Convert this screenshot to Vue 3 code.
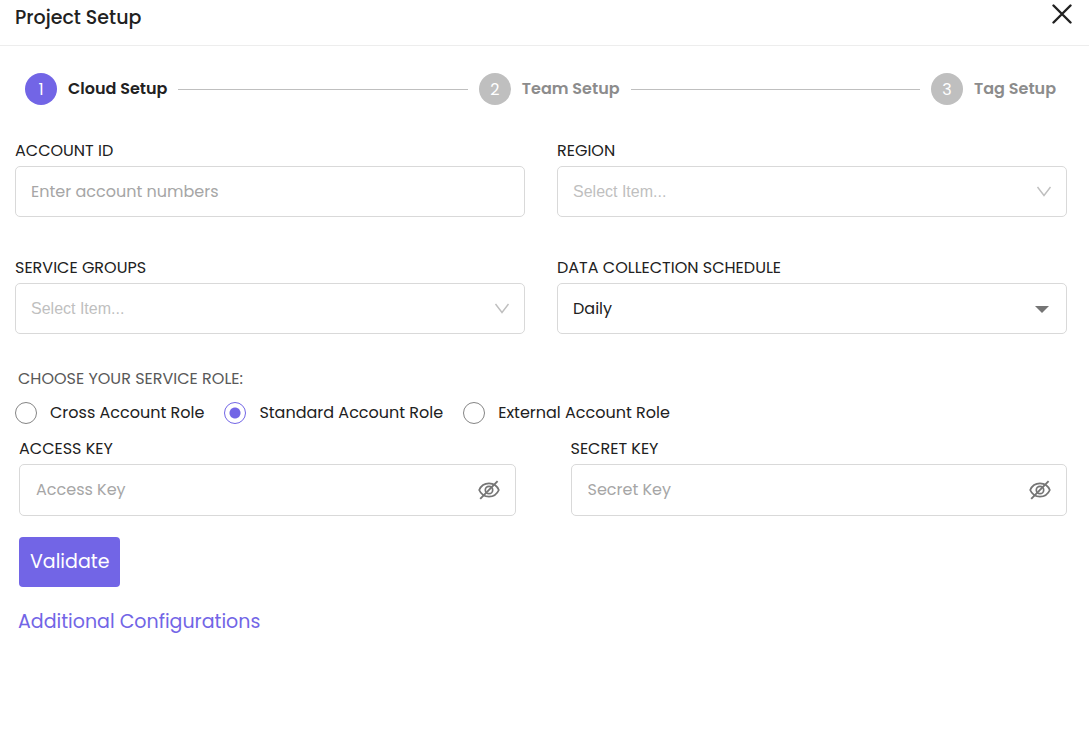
<script setup>
import { ref } from 'vue'

const steps = ['Cloud Setup', 'Team Setup', 'Tag Setup']
const roles = ['Cross Account Role', 'Standard Account Role', 'External Account Role']

const current = ref(0)
const role = ref('Standard Account Role')
const accountId = ref('')
const region = ref('')
const group = ref('')
const schedule = ref('Daily')
const keys = ref([
  { id: 'access', label: 'Access Key', value: '', shown: false },
  { id: 'secret', label: 'Secret Key', value: '', shown: false },
])
</script>

<template>
  <main class="page">
    <header class="head">
      <h1>Project Setup</h1>
      <button type="button" class="close" aria-label="Close">
        <svg width="20" height="20" viewBox="0 0 20 20">
          <path d="M1.5 1.5 L18.5 18.5 M18.5 1.5 L1.5 18.5" stroke="#212121" stroke-width="2.4" stroke-linecap="round" />
        </svg>
      </button>
    </header>

    <ol class="steps">
      <li v-for="(s, i) in steps" :key="s" class="step" :class="{ active: i === current }">
        <span class="num">{{ i + 1 }}</span>
        <span class="name">{{ s }}</span>
      </li>
    </ol>

    <form class="form" @submit.prevent>
      <div class="grid">
        <div class="field">
          <label for="account">ACCOUNT ID</label>
          <div class="box">
            <input id="account" v-model="accountId" type="text" placeholder="Enter account numbers" />
          </div>
        </div>
        <div class="field">
          <label for="region">REGION</label>
          <div class="box">
            <select id="region" v-model="region" class="empty">
              <option value="">Select Item...</option>
            </select>
            <svg class="chevron" width="16" height="12" viewBox="0 0 16 12">
              <path d="M1.5 1 L8 9.5 L14.5 1" fill="none" stroke="#bfbfbf" stroke-width="1.4" />
            </svg>
          </div>
        </div>
        <div class="field">
          <label for="group">SERVICE GROUPS</label>
          <div class="box">
            <select id="group" v-model="group" class="empty">
              <option value="">Select Item...</option>
            </select>
            <svg class="chevron" width="16" height="12" viewBox="0 0 16 12">
              <path d="M1.5 1 L8 9.5 L14.5 1" fill="none" stroke="#bfbfbf" stroke-width="1.4" />
            </svg>
          </div>
        </div>
        <div class="field">
          <label for="schedule">DATA COLLECTION SCHEDULE</label>
          <div class="box">
            <select id="schedule" v-model="schedule">
              <option>Daily</option>
            </select>
            <svg class="caret" width="14" height="9" viewBox="0 0 14 9">
              <path d="M0 2 H14 L7 9 Z" fill="#757575" />
            </svg>
          </div>
        </div>
      </div>

      <fieldset class="roles">
        <legend>CHOOSE YOUR SERVICE ROLE:</legend>
        <div class="options">
          <label v-for="r in roles" :key="r" class="option">
            <input v-model="role" type="radio" name="role" :value="r" />
            <span>{{ r }}</span>
          </label>
        </div>
      </fieldset>

      <div class="keys">
        <div v-for="k in keys" :key="k.id" class="field">
          <label :for="k.id">{{ k.label.toUpperCase() }}</label>
          <div class="box tall">
            <input :id="k.id" v-model="k.value" :type="k.shown ? 'text' : 'password'" :placeholder="k.label" />
            <button type="button" class="eye" :aria-label="'Show ' + k.label" @click="k.shown = !k.shown">
              <svg width="22" height="20" viewBox="0 0 22 20" fill="none" stroke="#757575">
                <path d="M1.2 10 C3 5.8 6.6 3.4 11 3.4 S19 5.8 20.8 10 C19 14.2 15.4 16.6 11 16.6 S3 14.2 1.2 10 Z" stroke-width="1.8" />
                <circle cx="11" cy="10" r="3.7" stroke-width="1.7" />
                <path d="M2.2 18.8 L19.6 1.2" stroke-width="1.9" />
              </svg>
            </button>
          </div>
        </div>
      </div>

      <button type="submit" class="validate">Validate</button>
      <a href="#" class="more">Additional Configurations</a>
    </form>
  </main>
</template>

<style>
body {
  background: #fff;
}
</style>

<style scoped>
.page {
  font-family: Poppins, Inter, "Open Sans", sans-serif;
  font-size: 16px;
  line-height: 24px;
  color: #212121;
}
.page * {
  box-sizing: border-box;
}
button, input, select {
  font: inherit;
  color: inherit;
  margin: 0;
}
.head {
  display: flex;
  justify-content: space-between;
  align-items: flex-start;
  height: 46px;
  padding: 4px 17px 0 15px;
  border-bottom: 1px solid #ededed;
}
h1 {
  margin: 0;
  font-size: 19px;
  line-height: 28px;
  font-weight: 500;
}
.close {
  display: flex;
  padding: 0;
  border: 0;
  background: none;
}
.steps {
  display: flex;
  margin: 0;
  padding: 27px 33px 0 25px;
  list-style: none;
}
.step {
  display: flex;
  align-items: center;
  gap: 11px;
  color: #8c8c8c;
}
.step:not(:last-child) {
  flex: 1 1 auto;
  margin-right: 11px;
}
.step:not(:last-child)::after {
  content: "";
  flex: 1;
  height: 1px;
  background: #bfbfbf;
}
.num {
  width: 32px;
  height: 32px;
  border-radius: 50%;
  background: #bfbfbf;
  color: #fff;
  text-align: center;
  line-height: 33px;
}
.name {
  font-weight: 600;
}
.active {
  color: #212121;
}
.active .num {
  background: #7265e6;
}
.form {
  padding: 33px 22px 0 15px;
}
.grid {
  display: grid;
  grid-template-columns: 1fr 1fr;
  gap: 38px 32px;
}
.field > label {
  display: block;
  height: 28px;
  line-height: 26px;
}
.box {
  display: grid;
  align-items: center;
  height: 51px;
  border: 1px solid #d9d9d9;
  border-radius: 5px;
}
.box > * {
  grid-area: 1 / 1;
}
.box input,
.box select {
  width: 100%;
  height: 49px;
  padding: 0 15px;
  border: 0;
  border-radius: 5px;
  background: none;
  appearance: none;
  outline: 0;
}
.box input::placeholder {
  color: #a6a6a6;
  opacity: 1;
}
.box .empty {
  color: #bfbfbf;
  font-family: "Liberation Sans", Arial, sans-serif;
}
.chevron,
.caret {
  justify-self: end;
  margin-right: 14px;
  pointer-events: none;
}
.caret {
  margin-right: 17px;
}
.roles {
  margin: 32px 0 0;
  padding: 0;
  border: 0;
}
legend {
  padding: 0 3px;
  line-height: 26px;
  color: #595959;
}
.options {
  display: flex;
  gap: 20px;
  padding-top: 9px;
}
.option {
  display: flex;
  align-items: center;
  gap: 13px;
}
.option input {
  appearance: none;
  width: 22px;
  height: 22px;
  border: 1px solid #858585;
  border-radius: 50%;
}
.option input:checked {
  border-color: #7265e6;
  background: radial-gradient(circle, #7265e6 5px, transparent 6px);
}
.keys {
  display: grid;
  grid-template-columns: 1fr 1fr;
  gap: 55px;
  margin: 11px 0 0 4px;
}
.tall {
  height: 52px;
  align-items: start;
}
.tall input {
  padding: 0 16px;
}
.eye {
  display: flex;
  align-self: center;
  justify-self: end;
  margin-right: 15px;
  padding: 0;
  border: 0;
  background: none;
}
.validate {
  display: block;
  height: 50px;
  margin: 21px 0 0 4px;
  padding: 0 11px;
  border: 0;
  border-radius: 4px;
  background: #7265e6;
  color: #fff;
  font-size: 19px;
}
.more {
  display: inline-block;
  margin: 23px 0 0 3px;
  color: #7265e6;
  font-size: 19px;
  text-decoration: none;
}
</style>
